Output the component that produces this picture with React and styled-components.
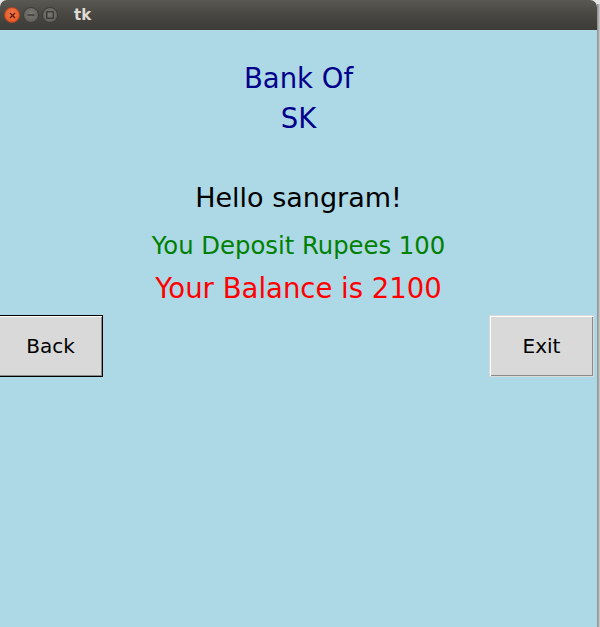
import React from "react";
import styled, { createGlobalStyle } from "styled-components";

const GlobalStyle = createGlobalStyle`
  html, body {
    margin: 0;
    padding: 0;
    width: 600px;
    height: 627px;
    overflow: hidden;
    background: #e6e6e6;
  }
`;

const Screen = styled.div`
  display: flex;
  width: 600px;
  height: 627px;
`;

const Window = styled.div`
  display: flex;
  flex-direction: column;
  width: 597px;
  height: 627px;
`;

const Shadow = styled.div`
  width: 3px;
  margin-top: 4px;
  background: linear-gradient(to right, #8c8c8c, #a9a9a9, #cfcfcf);
`;

const TitleBar = styled.div`
  display: flex;
  align-items: center;
  gap: 3px;
  height: 30px;
  padding: 0 0 0 4px;
  box-sizing: border-box;
  border-radius: 7px 7px 0 0;
  background: linear-gradient(to bottom, #5a5852 0%, #4a4843 45%, #3d3b37 100%);
  font-family: "DejaVu Sans", sans-serif;
`;

const Control = styled.div`
  flex: none;
  display: flex;
  align-items: center;
  justify-content: center;
  width: 16px;
  height: 16px;
  border-radius: 50%;
  box-sizing: border-box;
  border: 1px solid ${(p) => (p.close ? "#b8431c" : "#3e3c38")};
  background: ${(p) =>
    p.close
      ? "radial-gradient(circle at 50% 40%, #f27a4a, #e1501f)"
      : "radial-gradient(circle at 50% 40%, #7a7872, #5c5a55)"};
`;

const WindowTitle = styled.span`
  margin-left: 13px;
  color: #dfdbd2;
  font-size: 15px;
  font-weight: bold;
`;

const Content = styled.div`
  flex: 1;
  display: flex;
  flex-direction: column;
  align-items: center;
  padding-top: 28px;
  background: #add8e6;
  font-family: "DejaVu Sans", sans-serif;
`;

const Label = styled.div`
  font-size: ${(p) => p.size || 27}px;
  line-height: 40px;
  color: ${(p) => p.color || "#000000"};
  margin-top: ${(p) => p.gap || 0}px;
  text-align: center;
  white-space: pre;
`;

const ButtonRow = styled.div`
  align-self: stretch;
  display: flex;
  justify-content: space-between;
  margin-top: 7px;
  padding-right: 3px;
`;

const TkButton = styled.button`
  width: 105px;
  height: 62px;
  margin-left: ${(p) => (p.focused ? "-2px" : "0")};
  box-sizing: border-box;
  padding: 0;
  background: #d9d9d9;
  font-family: "DejaVu Sans", sans-serif;
  font-size: 20px;
  color: #000000;
  border: 1px solid ${(p) => (p.focused ? "#000000" : "#d9d9d9")};
  box-shadow: inset 1px 1px 0 #ffffff, inset -1px -1px 0 #8a8a8a;
  outline: none;
`;

export default function App() {
  return (
    <>
      <GlobalStyle />
      <Screen>
        <Window>
          <TitleBar>
            <Control close>
              <svg width="7" height="7" viewBox="0 0 7 7">
                <path d="M1 1 L6 6 M6 1 L1 6" stroke="#5a1a08" strokeWidth="1.2" />
              </svg>
            </Control>
            <Control>
              <svg width="8" height="8" viewBox="0 0 8 8">
                <path d="M0.5 4 H7.5" stroke="#2e2d2a" strokeWidth="1.2" />
              </svg>
            </Control>
            <Control>
              <svg width="8" height="8" viewBox="0 0 8 8">
                <rect x="0.8" y="0.8" width="6.4" height="6.4" fill="none" stroke="#2e2d2a" strokeWidth="1.1" />
              </svg>
            </Control>
            <WindowTitle>tk</WindowTitle>
          </TitleBar>
          <Content>
            <Label size={27.5} color="#00008b">{"Bank Of\nSK"}</Label>
            <Label gap={40}>Hello sangram!</Label>
            <Label gap={8} size={24.3} color="#008000">
              You Deposit Rupees 100
            </Label>
            <Label gap={2} size={27.5} color="#ff0000">
              Your Balance is 2100
            </Label>
            <ButtonRow>
              <TkButton focused>Back</TkButton>
              <TkButton>Exit</TkButton>
            </ButtonRow>
          </Content>
        </Window>
        <Shadow />
      </Screen>
    </>
  );
}
